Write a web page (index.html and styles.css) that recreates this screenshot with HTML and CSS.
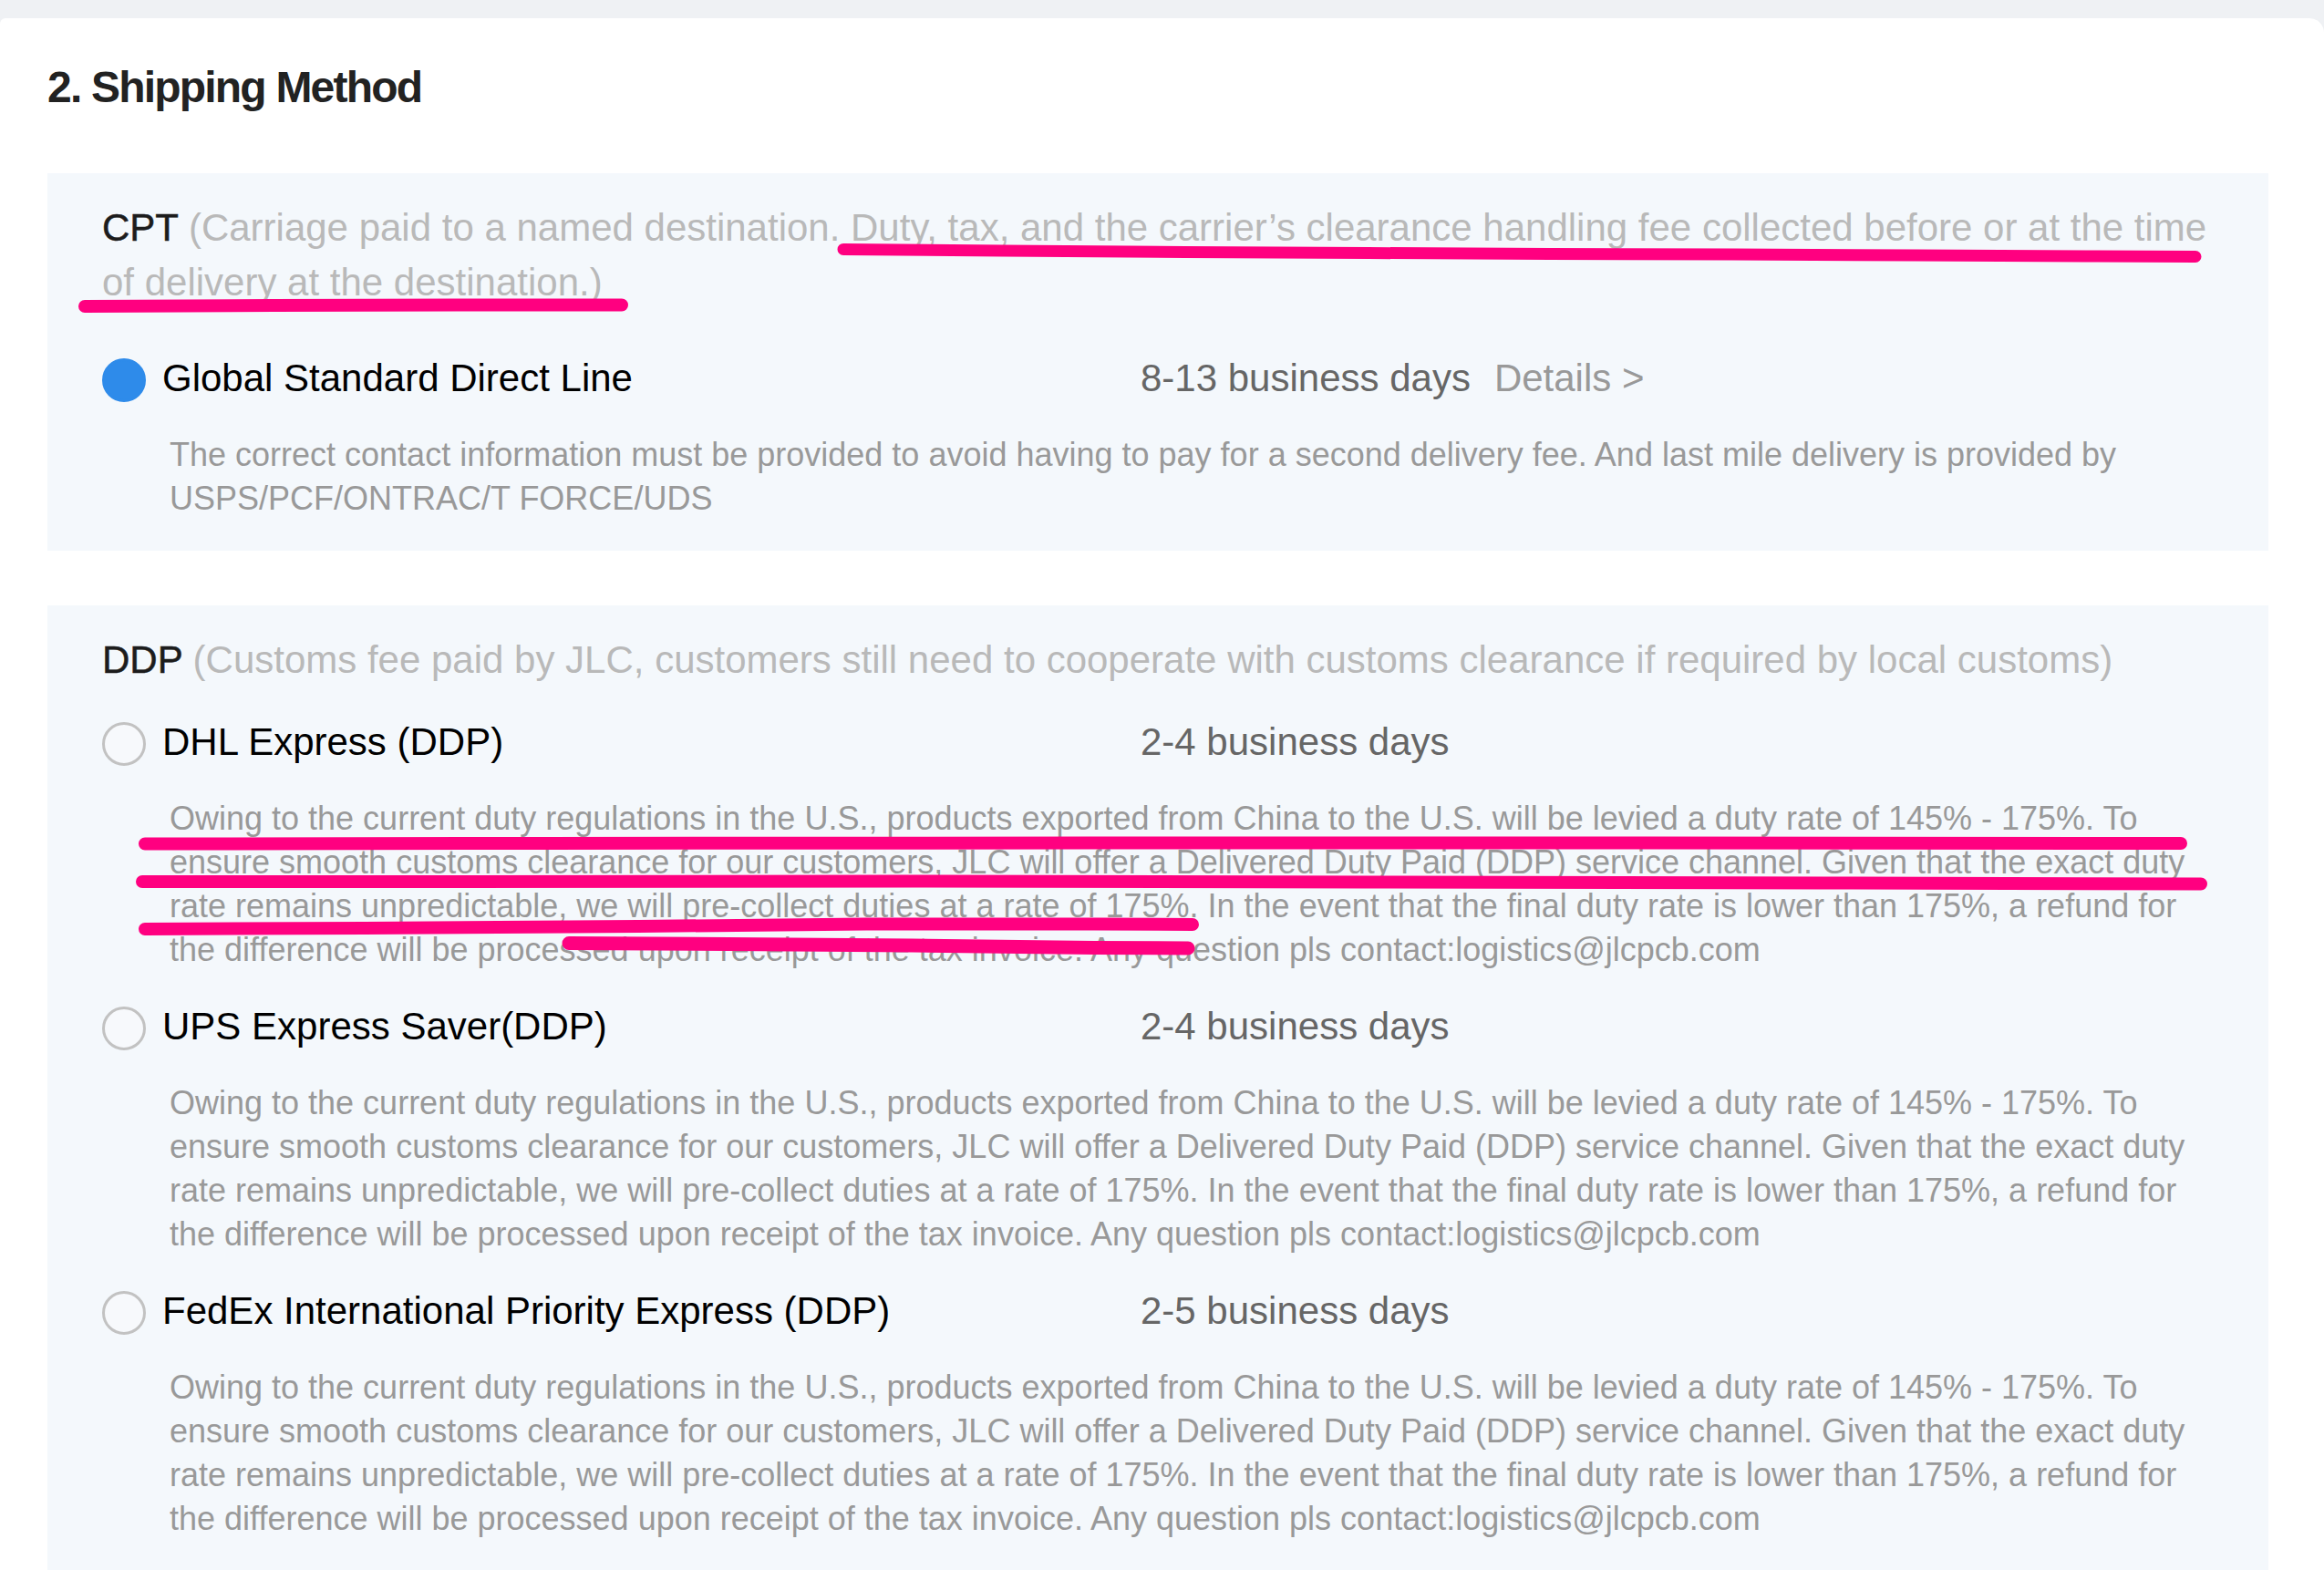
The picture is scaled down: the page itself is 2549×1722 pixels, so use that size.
FILE: index.html
```html
<!DOCTYPE html>
<html lang="en">
<head>
<meta charset="utf-8">
<title>Shipping Method</title>
<link rel="stylesheet" href="styles.css">
</head>
<body>
<div class="page">
  <section class="panel">
    <h2 class="title">2. Shipping Method</h2>

    <div class="group group-cpt">
      <p class="group-head"><span class="term">CPT</span> <span class="note">(Carriage paid to a named destination. Duty, tax, and the carrier’s clearance handling fee collected before or at the time of delivery at the destination.)</span></p>

      <div class="option option-first">
        <span class="radio radio-on"></span>
        <span class="name">Global Standard Direct Line</span>
        <span class="days">8-13 business days</span>
        <span class="details">Details &gt;</span>
      </div>
      <p class="desc">The correct contact information must be provided to avoid having to pay for a second delivery fee. And last mile delivery is provided by USPS/PCF/ONTRAC/T FORCE/UDS</p>
    </div>

    <div class="group group-ddp">
      <p class="group-head"><span class="term">DDP</span> <span class="note">(Customs fee paid by JLC, customers still need to cooperate with customs clearance if required by local customs)</span></p>

      <div class="option">
        <span class="radio"></span>
        <span class="name">DHL Express (DDP)</span>
        <span class="days">2-4 business days</span>
      </div>
      <p class="desc">Owing to the current duty regulations in the U.S., products exported from China to the U.S. will be levied a duty rate of 145% - 175%. To ensure smooth customs clearance for our customers, JLC will offer a Delivered Duty Paid (DDP) service channel. Given that the exact duty rate remains unpredictable, we will pre-collect duties at a rate of 175%. In the event that the final duty rate is lower than 175%, a refund for the difference will be processed upon receipt of the tax invoice. Any question pls contact:logistics@jlcpcb.com</p>

      <div class="option">
        <span class="radio"></span>
        <span class="name">UPS Express Saver(DDP)</span>
        <span class="days">2-4 business days</span>
      </div>
      <p class="desc">Owing to the current duty regulations in the U.S., products exported from China to the U.S. will be levied a duty rate of 145% - 175%. To ensure smooth customs clearance for our customers, JLC will offer a Delivered Duty Paid (DDP) service channel. Given that the exact duty rate remains unpredictable, we will pre-collect duties at a rate of 175%. In the event that the final duty rate is lower than 175%, a refund for the difference will be processed upon receipt of the tax invoice. Any question pls contact:logistics@jlcpcb.com</p>

      <div class="option">
        <span class="radio"></span>
        <span class="name">FedEx International Priority Express (DDP)</span>
        <span class="days">2-5 business days</span>
      </div>
      <p class="desc">Owing to the current duty regulations in the U.S., products exported from China to the U.S. will be levied a duty rate of 145% - 175%. To ensure smooth customs clearance for our customers, JLC will offer a Delivered Duty Paid (DDP) service channel. Given that the exact duty rate remains unpredictable, we will pre-collect duties at a rate of 175%. In the event that the final duty rate is lower than 175%, a refund for the difference will be processed upon receipt of the tax invoice. Any question pls contact:logistics@jlcpcb.com</p>
    </div>
  </section>

  <svg class="marks" width="2549" height="1722" viewBox="0 0 2549 1722" aria-hidden="true">
    <g fill="none" stroke="#ff0080" stroke-linecap="round" stroke-linejoin="round">
      <polyline stroke-width="13" points="925,273.5 1100,275 1300,276.5 1500,277.5 1700,278.5 1900,279 2100,280 2300,281 2408,281.5"/>
      <polyline stroke-width="14" points="93,336 300,335 500,334.5 682,334.5"/>
      <polyline stroke-width="14" points="159,925.5 600,925 1200,924.5 1800,924.5 2392,925"/>
      <polyline stroke-width="14" points="156,967 500,967 1000,966.5 1500,967.5 2000,968.5 2414,969.5"/>
      <polyline stroke-width="14" points="159,1019 400,1018 700,1016 950,1013.5 1200,1013.5 1308,1014"/>
      <polyline stroke-width="15" points="624,1034.5 800,1035.5 1000,1037 1200,1039.5 1303,1040"/>
    </g>
  </svg>
</div>
</body>
</html>
```
FILE: styles.css
```css
* { box-sizing: border-box; }

html, body {
  margin: 0;
  padding: 0;
}

body {
  background: #eff1f4;
  font-family: "Liberation Sans", Arial, Helvetica, sans-serif;
  color: #222;
}

.page {
  position: relative;
  width: 2549px;
  height: 1722px;
  overflow: hidden;
  padding-top: 20px;
}

.panel {
  background: #ffffff;
  border-radius: 6px 16px 0 0;
  padding: 48px 61px 0 52px;
  min-height: 1702px;
}

.title {
  margin: 0;
  font-size: 48px;
  line-height: 56px;
  font-weight: 700;
  letter-spacing: -1.8px;
  color: #222222;
}

.group {
  background: #f4f8fc;
  padding: 30px 60px 33px 60px;
}

.group-cpt {
  margin-top: 66px;
}

.group-ddp {
  margin-top: 60px;
  padding-bottom: 60px;
}

.group-head {
  margin: 0;
  font-size: 42px;
  line-height: 60px;
}

.term {
  color: #1c1c1c;
  -webkit-text-stroke: 0.5px #1c1c1c;
}

.note {
  color: #b9b9b9;
}

.option {
  display: flex;
  align-items: center;
  height: 60px;
  margin-top: 30px;
  font-size: 42px;
  line-height: 60px;
}

.option-first {
  margin-top: 45px;
}

.radio {
  flex: 0 0 48px;
  width: 48px;
  height: 48px;
  border-radius: 50%;
  border: 3px solid #c2c2c2;
  background: #f7f9fc;
  margin-top: 3px;
}

.radio-on {
  border-color: #2e8bea;
  background: #2e8bea;
}

.name {
  flex: 0 0 1091px;
  color: #000000;
  padding-left: 18px;
}

.days {
  color: #666666;
}

.details {
  color: #999999;
  margin-left: 26px;
}

.desc {
  margin: 30px 0 0 74px;
  font-size: 36px;
  line-height: 48px;
  color: #999999;
}

.marks {
  position: absolute;
  left: 0;
  top: 0;
  pointer-events: none;
}
```
